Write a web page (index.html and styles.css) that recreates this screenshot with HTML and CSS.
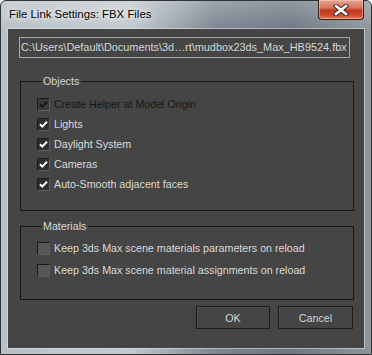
FILE: index.html
```html
<!DOCTYPE html>
<html lang="en">
<head>
    <meta charset="UTF-8">
    <title>File Link Settings: FBX Files</title>
    <link rel="stylesheet" href="styles.css">
</head>
<body>

<div class="window">
    <!-- Barra de título -->
    <div class="titlebar">
        <span class="title">File Link Settings: FBX Files</span>
        <button class="close-button" title="Close">
            <svg width="16" height="12" viewBox="0 0 16 12">
                <path d="M3 2 L13 10 M13 2 L3 10" stroke="#3a2a28" stroke-width="4.6" stroke-linecap="square"/>
                <path d="M3 2 L13 10 M13 2 L3 10" stroke="#ffffff" stroke-width="2.6" stroke-linecap="square"/>
            </svg>
        </button>
    </div>

    <div class="client">
        <div class="path-field">C:\Users\Default\Documents\3d…rt\mudbox23ds_Max_HB9524.fbx</div>

        <fieldset class="group objects">
            <legend>Objects</legend>
            <label class="check-row disabled"><span class="check checked"></span>Create Helper at Model Origin</label>
            <label class="check-row"><span class="check checked"></span>Lights</label>
            <label class="check-row"><span class="check checked"></span>Daylight System</label>
            <label class="check-row"><span class="check checked"></span>Cameras</label>
            <label class="check-row"><span class="check checked"></span>Auto-Smooth adjacent faces</label>
        </fieldset>

        <fieldset class="group materials">
            <legend>Materials</legend>
            <label class="check-row"><span class="check"></span>Keep 3ds Max scene materials parameters on reload</label>
            <label class="check-row"><span class="check"></span>Keep 3ds Max scene material assignments on reload</label>
        </fieldset>

        <div class="buttons">
            <button class="dlg-button ok">OK</button>
            <button class="dlg-button">Cancel</button>
        </div>
    </div>
</div>

</body>
</html>
```

FILE: styles.css
```css
body {
    margin: 0;
    background-color: #ffffff;
    font-family: "Liberation Sans", Arial, sans-serif;
}
.window {
    width: 372px;
    height: 355px;
    box-sizing: border-box;
    border: 1px solid #2e3338;
    border-radius: 6px 6px 0 0;
    padding: 0 7px 6px 7px;
    display: flex;
    flex-direction: column;
    background:
        linear-gradient(to bottom, rgba(255,255,255,0.25), rgba(255,255,255,0) 30px),
        linear-gradient(to right, #b9c0c6 0%, #c3c9ce 35%, #7b8691 58%, #6c7782 78%, #8e969d 100%);
}
.titlebar {
    height: 28px;
    display: flex;
    justify-content: space-between;
    align-items: flex-start;
}
.title {
    margin: 7px 0 0 1px;
    font-size: 11.4px;
    color: #000000;
    text-shadow: 0 0 8px #ffffff, 0 0 4px #ffffff;
}
.close-button {
    width: 46px;
    height: 20px;
    margin-top: -1px;
    padding: 0;
    border: 1px solid #3b1d17;
    border-top: none;
    border-radius: 0 0 4px 4px;
    background: linear-gradient(to bottom, #e9a592 0%, #d8765e 40%, #c1381f 55%, #cf5232 85%, #e08a6c 100%);
    box-shadow: inset 0 0 0 1px rgba(255,220,200,0.45);
    display: flex;
    align-items: center;
    justify-content: center;
}
.client {
    flex: 1;
    background-color: #454545;
    box-shadow: 0 0 0 1px rgba(225,230,236,0.55);
    padding: 8px 10px 0 12px;
    font-size: 10.7px;
    color: #dadada;
}
.path-field {
    margin-left: -1px;
    width: 328px;
    height: 19px;
    border: 1px solid #a9a9a9;
    padding-left: 1px;
    font-size: 10.9px;
    line-height: 19px;
    color: #d8d8d8;
    white-space: nowrap;
    overflow: hidden;
}
.group {
    margin: 16px 0 0 0;
    border: 1px solid #161616;
    padding: 6px 0 16px 16px;
}
.group legend {
    margin-left: 5px;
    padding: 0 2px 0 1px;
    line-height: 14px;
    font-size: 10.7px;
    color: #d6d6d6;
}
.materials {
    margin-top: 8px;
    padding-top: 4px;
    padding-bottom: 18px;
}
.check-row {
    display: flex;
    align-items: center;
    height: 20px;
}
.materials .check-row {
    height: 22px;
}
.check-row.disabled {
    color: #161616;
}
.check {
    width: 13px;
    height: 13px;
    box-sizing: border-box;
    margin-right: 4px;
    border: 1px solid #1a1a1a;
    border-right-color: #5e5e5e;
    border-bottom-color: #5e5e5e;
    background-color: #575757;
    background-repeat: no-repeat;
    background-position: center;
}
.check.checked {
    background-color: #2f2f2f;
    background-image: url("data:image/svg+xml;utf8,<svg xmlns='http://www.w3.org/2000/svg' width='11' height='11' viewBox='0 0 11 11'><path d='M2 5.2 L4.3 7.6 L9 2.6' fill='none' stroke='white' stroke-width='2'/></svg>");
}
.disabled .check.checked {
    background-color: #3a3a3a;
    background-image: url("data:image/svg+xml;utf8,<svg xmlns='http://www.w3.org/2000/svg' width='11' height='11' viewBox='0 0 11 11'><path d='M2 5.2 L4.3 7.6 L9 2.6' fill='none' stroke='%23151515' stroke-width='2'/></svg>");
}
.buttons {
    display: flex;
    justify-content: flex-end;
    gap: 8px;
    margin: 6px 1px 0 0;
}
.dlg-button {
    width: 75px;
    height: 23px;
    padding: 0;
    border: 1px solid #1c1c1c;
    background-color: #454545;
    box-shadow: inset 1px 1px 0 #4f4f4f;
    color: #d4d4d4;
    font-family: "Liberation Sans", Arial, sans-serif;
    font-size: 10.7px;
}
.dlg-button.ok {
    width: 74px;
}
```
